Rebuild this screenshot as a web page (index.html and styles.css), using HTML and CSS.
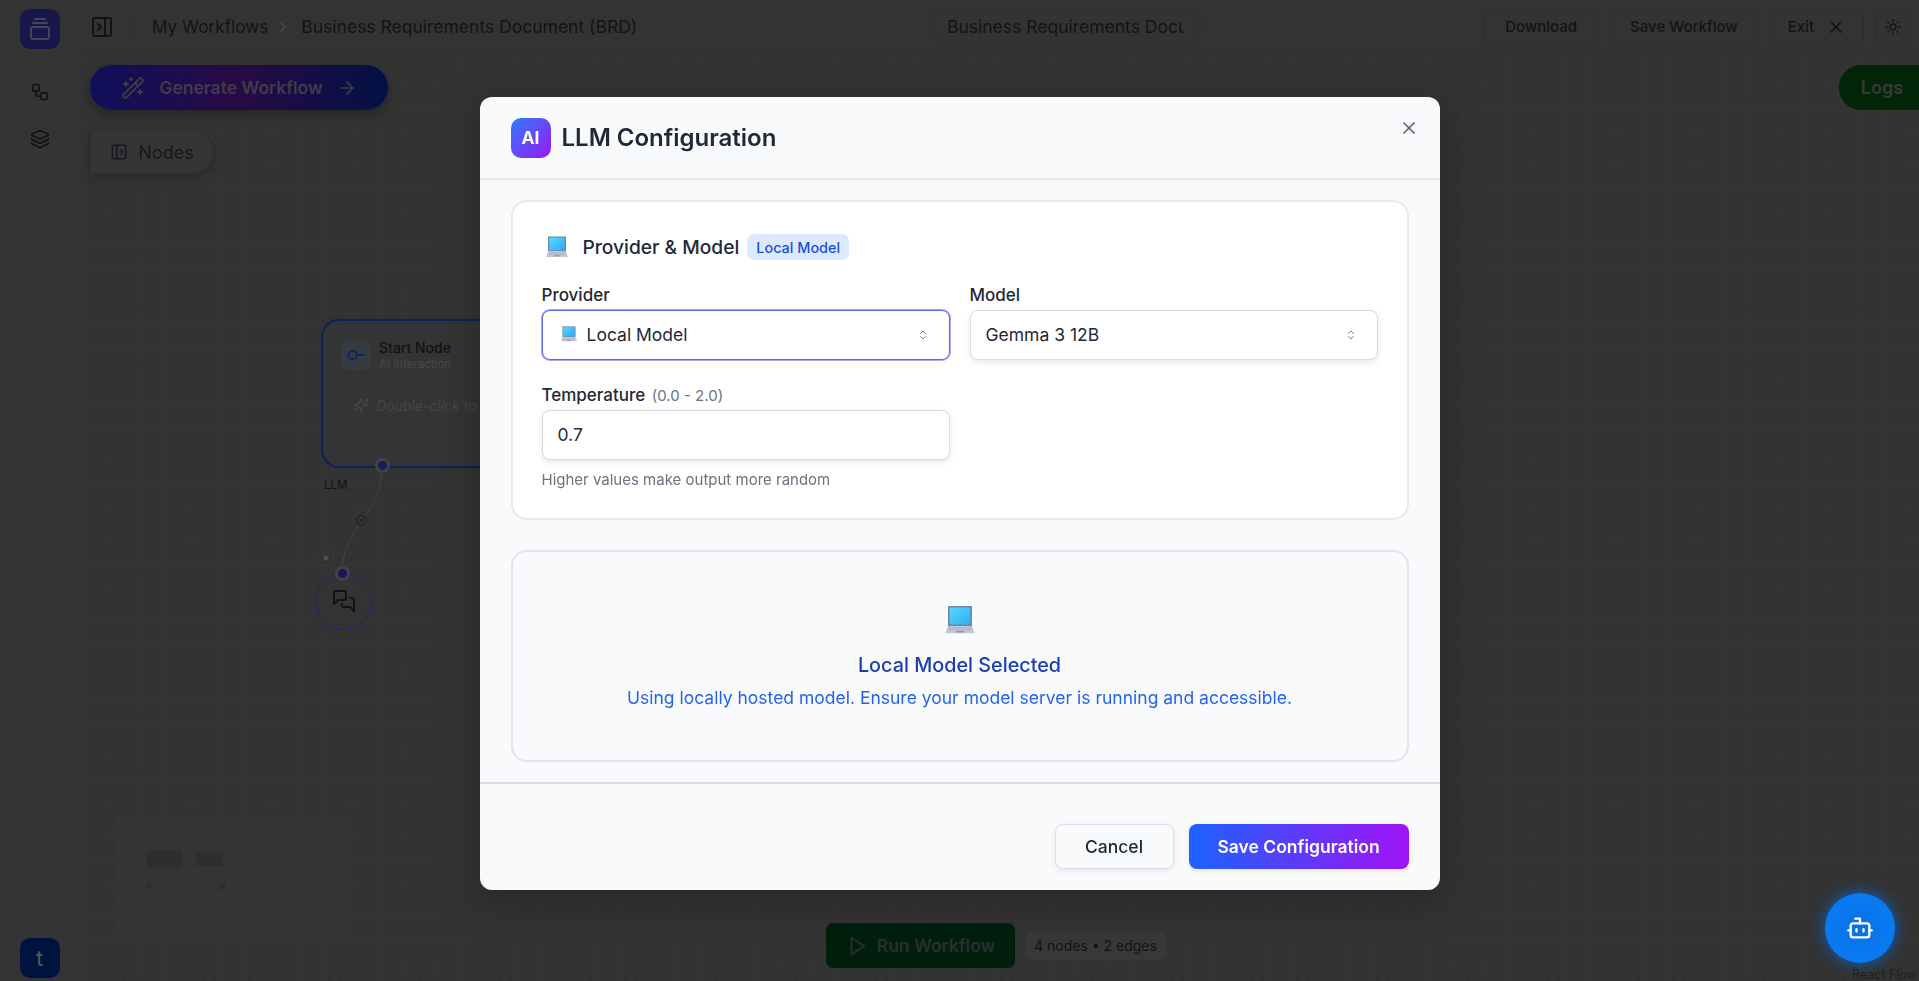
FILE: index.html
```html
<!DOCTYPE html>
<html lang="en">
<head>
  <meta charset="UTF-8">
  <title>LLM Configuration</title>
  <link rel="stylesheet" href="styles.css">
</head>
<body>
  <div class="app">
    <aside class="sidebar">
      <div class="logo">
        <svg class="icon" width="24" height="24" viewBox="0 0 24 24"><path d="M7 2h10"/><path d="M5 6h14"/><rect x="3" y="10" width="18" height="12" rx="2"/></svg>
      </div>
      <nav class="side-nav">
        <svg class="icon" width="20" height="20" viewBox="0 0 24 24"><rect x="3" y="3" width="8" height="8" rx="2"/><path d="M7 11v4a2 2 0 0 0 2 2h4"/><rect x="13" y="13" width="8" height="8" rx="2"/></svg>
        <svg class="icon" width="20" height="20" viewBox="0 0 24 24"><path d="M12.83 2.18a2 2 0 0 0-1.66 0L2.6 6.08a1 1 0 0 0 0 1.83l8.58 3.91a2 2 0 0 0 1.66 0l8.58-3.9a1 1 0 0 0 0-1.83z"/><path d="M2 12a1 1 0 0 0 .58.91l8.6 3.91a2 2 0 0 0 1.65 0l8.58-3.9A1 1 0 0 0 22 12"/><path d="M2 17a1 1 0 0 0 .58.91l8.6 3.91a2 2 0 0 0 1.65 0l8.58-3.9A1 1 0 0 0 22 17"/></svg>
      </nav>
      <div class="avatar">t</div>
    </aside>

    <div class="workspace">
      <header class="topbar">
        <div class="crumbs">
          <svg class="icon toggle" width="24" height="24" viewBox="0 0 24 24"><rect x="3" y="3" width="18" height="18" rx="2"/><path d="M15 3v18"/><path d="m8 9 3 3-3 3"/></svg>
          <span class="divider"></span>
          <span class="crumb-root">My Workflows</span>
          <svg class="icon crumb-sep" width="16" height="16" viewBox="0 0 24 24"><path d="m9 18 6-6-6-6"/></svg>
          <span>Business Requirements Document (BRD)</span>
        </div>
        <input class="title-input" type="text" value="Business Requirements Document (BRD)">
        <div class="actions">
          <button class="top-btn">Download</button>
          <button class="top-btn">Save Workflow</button>
          <button class="top-btn exit-btn">Exit
            <svg class="icon" width="20" height="20" viewBox="0 0 24 24"><path d="M18 6 6 18"/><path d="m6 6 12 12"/></svg>
          </button>
          <button class="top-btn theme-btn">
            <svg class="icon" width="18" height="18" viewBox="0 0 24 24"><circle cx="12" cy="12" r="4"/><path d="M12 2v2"/><path d="M12 20v2"/><path d="m4.93 4.93 1.41 1.41"/><path d="m17.66 17.66 1.41 1.41"/><path d="M2 12h2"/><path d="M20 12h2"/><path d="m6.34 17.66-1.41 1.41"/><path d="m19.07 4.93-1.41 1.41"/></svg>
          </button>
        </div>
      </header>

      <main class="canvas">
        <div class="canvas-tools">
          <button class="generate-btn">
            <svg class="icon" width="24" height="24" viewBox="0 0 24 24"><path d="m21.64 3.64-1.28-1.28a1.21 1.21 0 0 0-1.72 0L2.36 18.64a1.21 1.21 0 0 0 0 1.72l1.28 1.28a1.2 1.2 0 0 0 1.72 0L21.64 5.36a1.2 1.2 0 0 0 0-1.72"/><path d="m14 7 3 3"/><path d="M5 6v4"/><path d="M19 14v4"/><path d="M10 2v2"/><path d="M7 8H3"/><path d="M21 16h-4"/><path d="M11 3H9"/></svg>
            Generate Workflow
            <svg class="icon" width="20" height="20" viewBox="0 0 24 24"><path d="M5 12h14"/><path d="m12 5 7 7-7 7"/></svg>
          </button>
          <button class="nodes-btn">
            <svg class="icon" width="18" height="18" viewBox="0 0 24 24"><rect x="3" y="3" width="18" height="18" rx="2"/><path d="M9 3v18"/><path d="m14 9 3 3-3 3"/></svg>
            Nodes
          </button>
        </div>
        <button class="logs-btn">Logs</button>

        <!-- flow diagram -->
        <div class="node start-node">
          <div class="node-head">
            <div class="node-icon">
              <svg width="20" height="20" viewBox="0 0 24 24"><circle cx="8" cy="12" r="5"/><path d="M13 12h9"/></svg>
            </div>
            <div>
              <div class="node-title">Start Node</div>
              <div class="node-sub">AI Interaction</div>
            </div>
          </div>
          <div class="node-hint">
            <svg class="icon" width="16" height="16" viewBox="0 0 24 24"><path d="M9.937 15.5A2 2 0 0 0 8.5 14.063l-6.135-1.582a.5.5 0 0 1 0-.962L8.5 9.936A2 2 0 0 0 9.937 8.5l1.582-6.135a.5.5 0 0 1 .963 0L14.063 8.5A2 2 0 0 0 15.5 9.937l6.135 1.581a.5.5 0 0 1 0 .964L15.5 14.063a2 2 0 0 0-1.437 1.437l-1.582 6.135a.5.5 0 0 1-.963 0z"/><path d="M20 3v4"/><path d="M22 5h-4"/><path d="M4 17v2"/><path d="M5 18H3"/></svg>
            <span>Double-click to set up</span>
          </div>
        </div>
        <span class="handle handle-out"></span>
        <span class="edge-label">LLM</span>
        <svg class="edge" width="60" height="110" viewBox="0 0 60 110"><path d="M43 0C43 44 3 56 3 104"/></svg>
        <span class="edge-del">
          <svg width="10" height="10" viewBox="0 0 24 24"><path d="M18 6 6 18"/><path d="m6 6 12 12"/></svg>
        </span>
        <span class="node-del">
          <svg width="10" height="10" viewBox="0 0 24 24"><path d="M18 6 6 18"/><path d="m6 6 12 12"/></svg>
        </span>
        <div class="node chat-node">
          <svg class="icon" width="24" height="24" viewBox="0 0 24 24"><path d="M14 9a2 2 0 0 1-2 2H6l-4 4V4a2 2 0 0 1 2-2h8a2 2 0 0 1 2 2z"/><path d="M18 9h2a2 2 0 0 1 2 2v11l-4-4h-6a2 2 0 0 1-2-2v-1"/></svg>
        </div>
        <span class="handle handle-in"></span>

        <div class="minimap">
          <span class="mini-node mini-a"></span>
          <span class="mini-node mini-b"></span>
          <span class="mini-node mini-c"></span>
          <span class="mini-node mini-d"></span>
        </div>

        <div class="run-bar">
          <button class="run-btn">
            <svg class="icon" width="22" height="22" viewBox="0 0 24 24"><polygon points="6 3 20 12 6 21 6 3"/></svg>
            Run Workflow
          </button>
          <span class="run-stats">4 nodes • 2 edges</span>
        </div>

        <button class="bot-btn">
          <svg class="icon" width="28" height="28" viewBox="0 0 24 24"><path d="M12 8V4H8"/><rect x="4" y="8" width="16" height="12" rx="2"/><path d="M2 14h2"/><path d="M20 14h2"/><path d="M15 13v2"/><path d="M9 13v2"/></svg>
        </button>
        <span class="attribution">React Flow</span>
      </main>
    </div>
  </div>

  <div class="modal-layer">
    <section class="modal">
      <header class="modal-head">
        <div class="ai-badge">AI</div>
        <h2>LLM Configuration</h2>
        <button class="modal-close">
          <svg class="icon" width="20" height="20" viewBox="0 0 24 24"><path d="M18 6 6 18"/><path d="m6 6 12 12"/></svg>
        </button>
      </header>

      <div class="modal-body">
        <div class="card">
          <div class="card-title">
            <svg class="laptop" width="24" height="22" viewBox="0 0 24 22"><use href="#laptop"/></svg>
            <h3>Provider &amp; Model</h3>
            <span class="tag">Local Model</span>
          </div>
          <div class="field-grid">
            <div class="field">
              <label>Provider</label>
              <div class="select is-focused">
                <svg class="laptop-small" width="18" height="16" viewBox="0 0 24 22"><use href="#laptop"/></svg>
                <span>Local Model</span>
                <svg class="chevrons" width="12" height="12" viewBox="0 0 24 24"><path d="m7 15 5 5 5-5"/><path d="m7 9 5-5 5 5"/></svg>
              </div>
            </div>
            <div class="field">
              <label>Model</label>
              <div class="select">
                <span>Gemma 3 12B</span>
                <svg class="chevrons" width="12" height="12" viewBox="0 0 24 24"><path d="m7 15 5 5 5-5"/><path d="m7 9 5-5 5 5"/></svg>
              </div>
            </div>
            <div class="field">
              <label>Temperature <small>(0.0 - 2.0)</small></label>
              <input class="text-input" type="text" value="0.7">
              <p class="help">Higher values make output more random</p>
            </div>
          </div>
        </div>

        <div class="card notice">
          <svg class="laptop" width="32" height="30" viewBox="0 0 24 22"><use href="#laptop"/></svg>
          <h4>Local Model Selected</h4>
          <p>Using locally hosted model. Ensure your model server is running and accessible.</p>
        </div>
      </div>

      <footer class="modal-foot">
        <button class="btn-cancel">Cancel</button>
        <button class="btn-save">Save Configuration</button>
      </footer>
    </section>
  </div>

  <svg class="sprite" width="0" height="0">
    <defs>
      <linearGradient id="screen" x1="0" y1="0" x2="1" y2="1">
        <stop offset="0" stop-color="#4fdcff"/>
        <stop offset="1" stop-color="#35a8f0"/>
      </linearGradient>
      <g id="laptop">
        <rect x="3" y="0.5" width="18" height="15" fill="#6d85b0"/>
        <rect x="4.2" y="1.6" width="15.6" height="12.8" fill="url(#screen)"/>
        <path d="M3 15.5h18l2 5.5H1z" fill="#c8c6d4"/>
        <path d="M4 16.8h16M3.5 18.2h17" stroke="#9d9bae" stroke-width=".6" stroke-dasharray="1 .4"/>
        <rect x="9" y="19.3" width="6" height="1" fill="#8d8b9c"/>
      </g>
    </defs>
  </svg>
</body>
</html>
```

FILE: styles.css
```css
* {
  box-sizing: border-box;
}

html, body {
  height: 100%;
}

body {
  margin: 0;
  overflow: hidden;
  font-family: Inter, "Liberation Sans", sans-serif;
  background: #333;
  color: #15181e;
}

button {
  font-family: inherit;
  cursor: pointer;
}

.icon {
  fill: none;
  stroke: currentColor;
  stroke-width: 2;
  stroke-linecap: round;
  stroke-linejoin: round;
  flex-shrink: 0;
}

.sprite {
  position: absolute;
}

.app {
  display: flex;
  height: 100%;
}

/* sidebar */
.sidebar {
  width: 80px;
  flex-shrink: 0;
  display: flex;
  flex-direction: column;
  align-items: center;
  padding: 9px 0 3px;
  background: #343434;
  border-right: 1px solid #303030;
}

.logo {
  width: 40px;
  height: 40px;
  border-radius: 10px;
  display: flex;
  align-items: center;
  justify-content: center;
  background: #17174c;
  color: #43435a;
}

.side-nav {
  flex: 1;
  display: flex;
  flex-direction: column;
  align-items: center;
  gap: 27px;
  padding-top: 33px;
  color: #101216;
}

.avatar {
  width: 40px;
  height: 40px;
  border-radius: 10px;
  display: flex;
  align-items: center;
  justify-content: center;
  font-size: 22px;
  background: #001340;
  color: #55595f;
}

/* top bar */
.workspace {
  flex: 1;
  min-width: 0;
  display: flex;
  flex-direction: column;
}

.topbar {
  height: 54px;
  flex-shrink: 0;
  display: flex;
  align-items: center;
  padding: 0 9px 0 10px;
  background: #333;
  border-bottom: 1px solid #2e2e2e;
}

.crumbs {
  display: flex;
  align-items: center;
  font-size: 17.5px;
  color: #101318;
  width: 840px;
}

.crumb-root {
  font-size: 17.2px;
}

.toggle {
  margin-right: 16px;
}

.divider {
  width: 1px;
  height: 20px;
  background: #2d2d2d;
  margin-right: 21px;
}

.crumb-sep {
  margin: 0 10px 0 7px;
  color: #4a4a4a;
}

.title-input {
  width: 271px;
  height: 34px;
  padding: 0 16px;
  border: 1px solid #2e2e2e;
  border-radius: 17px;
  background: #333;
  font: 17.5px Inter, sans-serif;
  color: #101318;
  outline: none;
}

.actions {
  margin-left: auto;
  display: flex;
  gap: 11px;
}

.top-btn {
  height: 34px;
  padding: 0 20px;
  display: flex;
  align-items: center;
  gap: 12px;
  border: 1px solid #2e2e2e;
  border-radius: 8px;
  background: #333;
  font-size: 15px;
  font-weight: 500;
  color: #101318;
}

.exit-btn {
  padding: 0 17px;
}

.theme-btn {
  width: 35px;
  padding: 0;
  justify-content: center;
}

/* canvas */
.canvas {
  flex: 1;
  position: relative;
  overflow: hidden;
  background-color: #333;
  background-image: radial-gradient(circle, #2a2a2a 0.6px, transparent 0.9px);
  background-size: 11.4px 11.4px;
  background-position: 4px -2.8px;
}

.canvas-tools {
  position: absolute;
  left: 10px;
  top: 11px;
  display: flex;
  flex-direction: column;
  align-items: flex-start;
  gap: 20px;
}

.generate-btn {
  width: 298px;
  height: 45px;
  display: flex;
  align-items: center;
  justify-content: center;
  gap: 14px;
  border: 0;
  border-radius: 22px;
  background: linear-gradient(90deg, #100f5a, #280a44 50%, #021145);
  box-shadow: 0 4px 12px rgba(0, 0, 0, .3);
  font-size: 17.5px;
  font-weight: 600;
  color: #3f3c4a;
}

.nodes-btn {
  width: 124px;
  height: 44px;
  display: flex;
  align-items: center;
  justify-content: center;
  gap: 10px;
  border: 1px solid #2f2f2f;
  border-radius: 0 22px 22px 0;
  background: #353535;
  box-shadow: 0 4px 10px rgba(0, 0, 0, .2);
  font-size: 18px;
  color: #15181e;
}

.logs-btn {
  position: absolute;
  right: -22px;
  top: 11px;
  width: 102px;
  height: 45px;
  padding-right: 22px;
  border: 0;
  border-radius: 22px;
  background: #022409;
  font-size: 18px;
  font-weight: 600;
  color: #363a3c;
}

.node {
  position: absolute;
}

.start-node {
  left: 241px;
  top: 265px;
  width: 280px;
  height: 149px;
  padding: 18px 18px;
  border: 2px solid #0a2259;
  border-radius: 18px;
  background: #343434;
}

.node-head {
  display: flex;
  align-items: center;
  gap: 8px;
}

.node-icon {
  width: 30px;
  height: 30px;
  display: flex;
  align-items: center;
  justify-content: center;
  border-radius: 8px;
  background: #363b42;
}

.node-icon svg {
  fill: none;
  stroke: #0a2260;
  stroke-width: 2.2;
}

.node-title {
  font-size: 14px;
  font-weight: 500;
  color: #101216;
}

.node-sub {
  margin-top: 1px;
  font-size: 11.5px;
  color: #474950;
}

.node-hint {
  height: 44px;
  margin-top: 12px;
  padding: 0 11px;
  display: flex;
  align-items: center;
  gap: 7px;
  white-space: nowrap;
  border: 1px solid #363636;
  border-radius: 8px;
  font-size: 14px;
  font-style: italic;
  color: #45474e;
}

.handle {
  position: absolute;
  width: 9px;
  height: 9px;
  border-radius: 50%;
  box-shadow: 0 0 0 3px #3f4246;
}

.handle-out {
  left: 298px;
  top: 407px;
  background: #102058;
}

.handle-in {
  left: 258px;
  top: 515px;
  background: #241254;
}

.edge-label {
  position: absolute;
  left: 244px;
  top: 424px;
  font-size: 11.5px;
  color: #101216;
}

.edge {
  position: absolute;
  left: 259px;
  top: 416px;
  fill: none;
  stroke: #444;
  stroke-width: 1;
}

.edge-del,
.node-del {
  position: absolute;
  display: flex;
  align-items: center;
  justify-content: center;
  border-radius: 50%;
}

.edge-del svg,
.node-del svg {
  fill: none;
  stroke: currentColor;
  stroke-width: 3;
}

.edge-del {
  left: 276px;
  top: 461px;
  width: 11px;
  height: 11px;
  background: #333;
  border: 1px solid #1a1a1a;
  color: #1a1a1a;
}

.edge-del svg {
  width: 7px;
  height: 7px;
}

.node-del {
  left: 237px;
  top: 495px;
  width: 18px;
  height: 18px;
  border: 1px solid #3b3b3b;
  color: #585858;
}

.chat-node {
  left: 235px;
  top: 519px;
  width: 57px;
  height: 57px;
  padding-bottom: 2px;
  display: flex;
  align-items: center;
  justify-content: center;
  border: 1px solid #3b1480;
  border-radius: 50%;
  background: #333;
  color: #101216;
}

.minimap {
  position: absolute;
  left: 36px;
  top: 762px;
  width: 236px;
  height: 118px;
  background: #343434;
}

.mini-node {
  position: absolute;
  background: #2e2e2e;
}

.mini-a { left: 31px; top: 34px; width: 35px; height: 18px; }
.mini-b { left: 80px; top: 36px; width: 27px; height: 14px; }
.mini-c { left: 30px; top: 66px; width: 7px; height: 7px; }
.mini-d { left: 103px; top: 67px; width: 7px; height: 7px; }

.run-bar {
  position: absolute;
  left: 746px;
  top: 869px;
  display: flex;
  align-items: center;
  gap: 10px;
}

.run-btn {
  width: 189px;
  height: 45px;
  display: flex;
  align-items: center;
  justify-content: center;
  gap: 9px;
  border: 0;
  border-radius: 7px;
  background: #011f0d;
  font-size: 17.5px;
  font-weight: 600;
  color: #2a2f30;
}

.run-stats {
  height: 29px;
  padding: 0 9px;
  display: flex;
  align-items: center;
  border-radius: 8px;
  background: #383838;
  font-size: 14px;
  color: #101318;
}

.bot-btn {
  position: absolute;
  left: 1745px;
  top: 839px;
  width: 70px;
  height: 70px;
  display: flex;
  align-items: center;
  justify-content: center;
  border: 0;
  border-radius: 50%;
  background: radial-gradient(circle, #0870e6, #0a80f8);
  box-shadow: 0 0 16px #0863c8;
  color: #fff;
}

.attribution {
  position: absolute;
  left: 1772px;
  top: 915px;
  font-size: 12.5px;
  line-height: 12px;
  color: #202020;
}

/* modal */
.modal-layer {
  position: fixed;
  inset: 0;
  display: flex;
  justify-content: center;
  align-items: flex-start;
  padding-top: 97px;
}

.modal {
  width: 960px;
  height: 793px;
  display: flex;
  flex-direction: column;
  border-radius: 12px;
  background: #f9fafc;
  box-shadow: 0 10px 40px rgba(0, 0, 0, .25);
}

.modal-head {
  position: relative;
  height: 83px;
  flex-shrink: 0;
  display: flex;
  align-items: center;
  gap: 11px;
  padding: 0 31px;
  border-bottom: 2px solid #e5e7eb;
}

.ai-badge {
  width: 40px;
  height: 40px;
  display: flex;
  align-items: center;
  justify-content: center;
  border-radius: 10px;
  background: linear-gradient(135deg, #2f7bff, #9a19f2);
  font-size: 17.5px;
  font-weight: 700;
  color: #fff;
}

.modal-head h2 {
  margin: 0;
  font-size: 24px;
  font-weight: 600;
  color: #1f2937;
}

.modal-close {
  position: absolute;
  right: 21px;
  top: 21px;
  padding: 0;
  display: flex;
  border: 0;
  background: none;
  color: #5b6472;
}

.modal-body {
  flex: 1;
  display: flex;
  flex-direction: column;
  gap: 30px;
  padding: 20px 31px 0;
  border-bottom: 2px solid #dadde6;
}

.card {
  height: 320px;
  padding: 31px 28px 0 29px;
  border: 2px solid #e7e9ee;
  border-radius: 16px;
  background: #fff;
}

.card-title {
  height: 28px;
  display: flex;
  align-items: center;
  gap: 8px;
}

.laptop {
  flex-shrink: 0;
}

.card-title .laptop {
  margin: 0 6px 0 3px;
}

.card-title h3 {
  margin: 0;
  font-size: 19.2px;
  font-weight: 500;
  color: #1f2937;
}

.tag {
  height: 26px;
  padding: 0 9px;
  display: flex;
  align-items: center;
  border-radius: 7px;
  background: #dbeafe;
  font-size: 14.4px;
  font-weight: 500;
  color: #1d4ed8;
}

.field-grid {
  display: grid;
  grid-template-columns: 408px 408px;
  column-gap: 20px;
  row-gap: 25px;
  margin-top: 24px;
}

.field label {
  display: block;
  height: 20px;
  line-height: 20px;
  margin-bottom: 5px;
  font-size: 17px;
  font-weight: 500;
  color: #1f2937;
}

.field small {
  margin-left: 2px;
  font-size: 15px;
  font-weight: 400;
  color: #6b7280;
}

.select,
.text-input {
  width: 100%;
  height: 50px;
  display: flex;
  align-items: center;
  padding: 0 15px 2px;
  border: 1px solid #d8dbe3;
  border-radius: 8px;
  background: #fff;
  box-shadow: 0 2px 6px rgba(0, 0, 0, .1);
  font: 17.5px Inter, sans-serif;
  color: #1f2937;
}

.select span {
  flex: 1;
}

.select.is-focused {
  border-color: #6366f1;
  box-shadow: 0 0 0 1px #a5a8f5;
}

.laptop-small {
  margin: 0 9px 0 2px;
}

.chevrons {
  margin: 2px 5px 0 0;
  fill: none;
  stroke: #7b8290;
  stroke-width: 2;
  stroke-linecap: round;
  stroke-linejoin: round;
}

.help {
  margin: 10px 0 0;
  font-size: 15px;
  color: #6b7280;
}

.notice {
  height: 212px;
  padding: 0;
  display: flex;
  flex-direction: column;
  align-items: center;
  justify-content: center;
  border-color: #e2e5ec;
  background: #f9fafc;
}

.notice h4 {
  margin: 18px 0 0;
  font-size: 19.8px;
  font-weight: 500;
  color: #1e40af;
}

.notice p {
  margin: 10px 0 0;
  font-size: 17.5px;
  color: #2563eb;
}

.modal-foot {
  height: 106px;
  flex-shrink: 0;
  display: flex;
  justify-content: flex-end;
  align-items: flex-start;
  gap: 15px;
  padding: 40px 31px 0;
}

.btn-cancel,
.btn-save {
  height: 45px;
  border-radius: 8px;
  font-size: 17.5px;
  font-weight: 500;
}

.btn-cancel {
  width: 119px;
  border: 1px solid #dcdfe6;
  background: #f9fafc;
  box-shadow: 0 2px 6px rgba(0, 0, 0, .08);
  color: #1f2937;
}

.btn-save {
  width: 220px;
  border: 0;
  background: linear-gradient(90deg, #1c62ff, #a012f5);
  box-shadow: 0 2px 6px rgba(0, 0, 0, .08);
  font-weight: 600;
  color: #fff;
}
```
